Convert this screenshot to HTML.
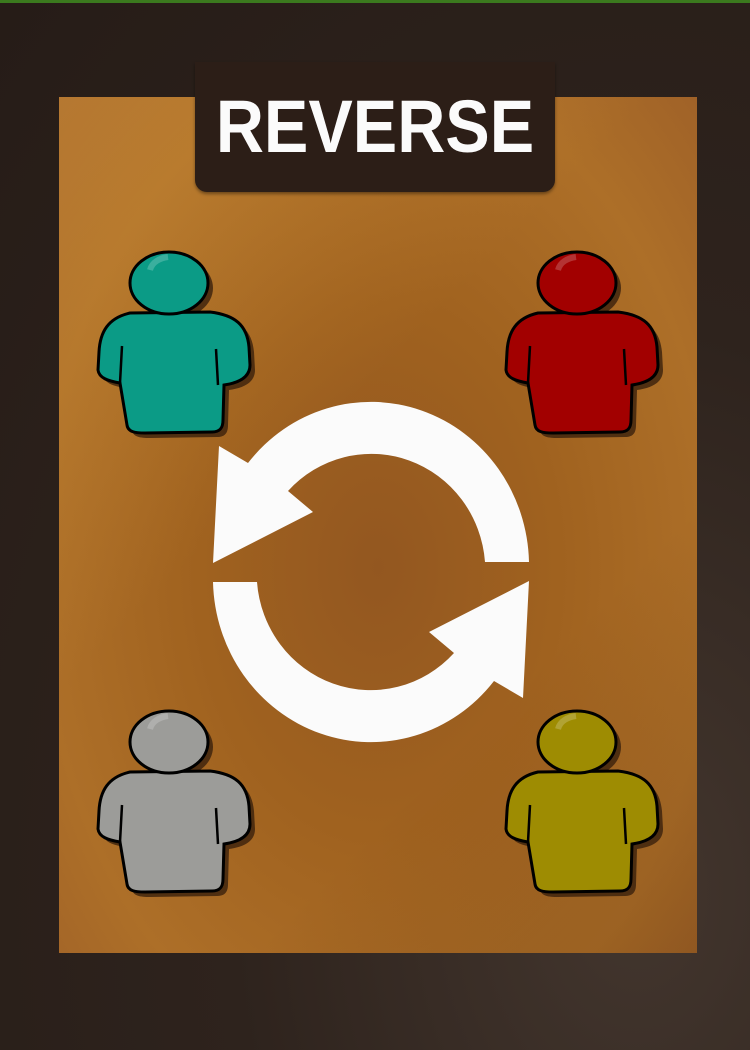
<!DOCTYPE html>
<html><head><meta charset="utf-8"><style>
html,body{margin:0;padding:0}
body{width:750px;height:1050px;overflow:hidden;position:relative;
background:radial-gradient(ellipse at 85% 85%,#43362e 0%,#2e231d 45%,#261c17 100%);font-family:"Liberation Sans",sans-serif}
.top{position:absolute;left:0;top:0;width:750px;height:3px;background:#3b7a1e}
.card{position:absolute;left:59px;top:97px;width:638px;height:856px;
background:radial-gradient(ellipse at 50% 55%,#935720 0%,#a0621f 40%,#ad6f28 75%,#a06228 100%);}
.card:before{content:"";position:absolute;inset:0;background:linear-gradient(135deg,rgba(230,170,70,.3) 0%,rgba(0,0,0,0) 40%,rgba(0,0,0,0) 70%,rgba(60,25,5,.2) 100%)}
.label{position:absolute;left:195px;top:62px;width:360px;height:130px;background:#2c1e17;border-radius:0 0 12px 12px;box-shadow:0 2px 3px rgba(0,0,0,.4)}
.label span{position:absolute;left:0;right:0;text-align:center;color:#fbfbfb;font-weight:bold;font-size:74px;line-height:1;letter-spacing:0px;transform:scaleX(.9) translateY(-50%);top:65px}
svg{position:absolute;left:0;top:0}
</style></head><body>
<div class="top"></div>
<div class="card"></div>
<div class="label"><span>REVERSE</span></div>
<svg width="750" height="1050" viewBox="0 0 750 1050">
<defs>
<g id="fig">
<path d="M130,313 C108,318 100,332 99,352 L98,370 C99,378 108,381 120,383 L127,425 C128,432 135,433 145,433 L212,432 C220,432 223,428 223,420 L224,385 C238,383 250,378 250,365 L249,347 C247,325 235,315 210,312 Z" fill="#3a200c" transform="translate(5,5)" opacity=".8"/>
<ellipse cx="174" cy="288" rx="39" ry="31" fill="#3a200c" opacity=".8"/>
<path d="M130,313 C108,318 100,332 99,352 L98,370 C99,378 108,381 120,383 L127,425 C128,432 135,433 145,433 L212,432 C220,432 223,428 223,420 L224,385 C238,383 250,378 250,365 L249,347 C247,325 235,315 210,312 Z" fill="currentColor" stroke="#000" stroke-width="3"/>
<path d="M122,346 L120,383 M216,349 L218,385" stroke="#000" stroke-width="2.5" fill="none"/>
<ellipse cx="169" cy="283" rx="39" ry="31" fill="currentColor" stroke="#000" stroke-width="3"/>
<path d="M150,270 C152,262 160,258 168,257" stroke="#fff" stroke-opacity=".2" stroke-width="6" fill="none"/>
</g>
</defs>
<use href="#fig" style="color:#0b9b86"/>
<use href="#fig" transform="translate(408,0)" style="color:#a20000"/>
<use href="#fig" transform="translate(0,459)" style="color:#9c9c99"/>
<use href="#fig" transform="translate(408,459)" style="color:#9e8c02"/>
<path fill="#fbfbfb" d="M529,562 A158,164 0 0 0 248,463 L219,446 L213,563 L313,512 L288,491 A114,117 0 0 1 485,562 Z"/>
<path fill="#fbfbfb" d="M213,582 A158,164 0 0 0 494,681 L523,698 L529,581 L429,632 L454,653 A114,117 0 0 1 257,582 Z"/>
</svg>
</body></html>
